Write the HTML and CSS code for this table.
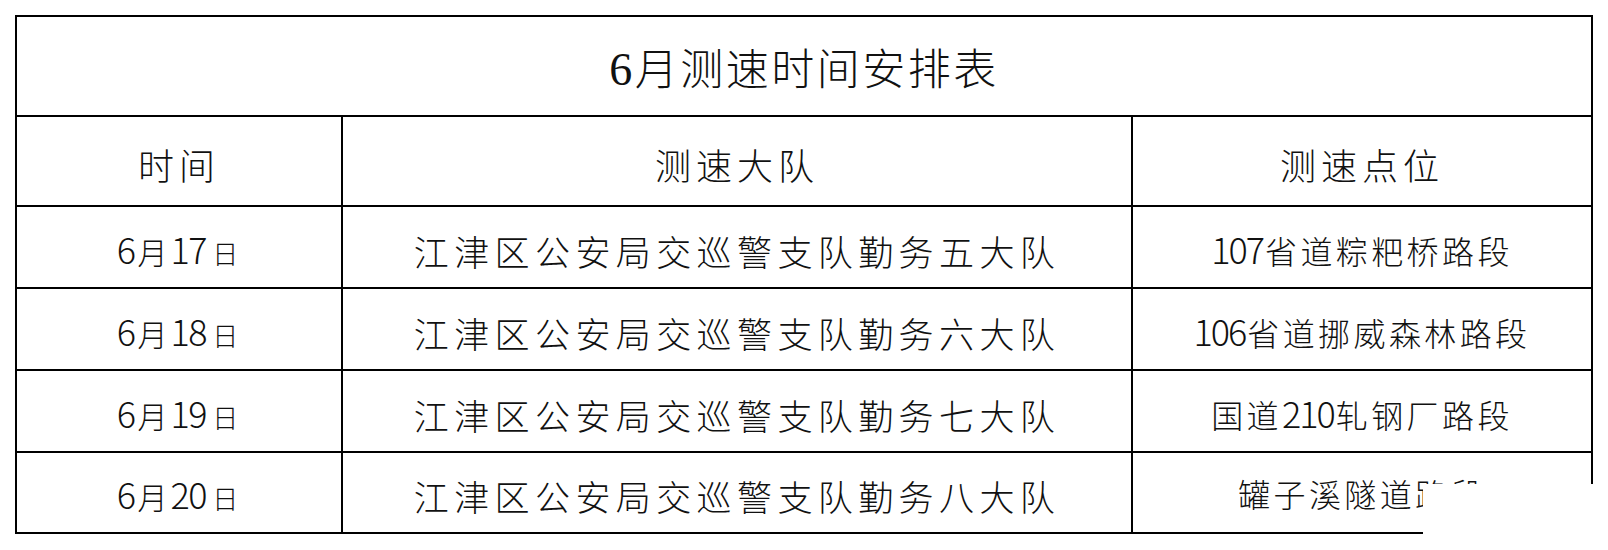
FILE: index.html
```html
<!DOCTYPE html>
<html lang="zh-CN">
<head>
<meta charset="utf-8">
<title>6月测速时间安排表</title>
<link rel="stylesheet" href="styles.css">
</head>
<body>
<table class="sched">
  <colgroup>
    <col class="c1"><col class="c2"><col class="c3">
  </colgroup>
  <tr class="title-row"><td colspan="3" class="title"><span class="t6">6</span>月测速时间安排表</td></tr>
  <tr class="head-row">
    <td class="head">时间</td>
    <td class="head">测速大队</td>
    <td class="head">测速点位</td>
  </tr>
  <tr class="data-row">
    <td class="date"><span class="n">6</span><span class="cj">月</span><span class="n">17</span><span class="cj sm">日</span></td>
    <td class="team">江津区公安局交巡警支队勤务五大队</td>
    <td class="place"><span class="n">107</span>省道粽粑桥路段</td>
  </tr>
  <tr class="data-row">
    <td class="date"><span class="n">6</span><span class="cj">月</span><span class="n">18</span><span class="cj sm">日</span></td>
    <td class="team">江津区公安局交巡警支队勤务六大队</td>
    <td class="place"><span class="n">106</span>省道挪威森林路段</td>
  </tr>
  <tr class="data-row">
    <td class="date"><span class="n">6</span><span class="cj">月</span><span class="n">19</span><span class="cj sm">日</span></td>
    <td class="team">江津区公安局交巡警支队勤务七大队</td>
    <td class="place">国道<span class="n">210</span>轧钢厂路段</td>
  </tr>
  <tr class="data-row last">
    <td class="date"><span class="n">6</span><span class="cj">月</span><span class="n">20</span><span class="cj sm">日</span></td>
    <td class="team">江津区公安局交巡警支队勤务八大队</td>
    <td class="place">罐子溪隧道路段</td>
  </tr>
</table>
<div class="mask"></div>
</body>
</html>
```

FILE: styles.css
```css
html, body {
  margin: 0;
  padding: 0;
  background: #fff;
}
body {
  padding: 15px;
  font-family: "Noto Sans CJK SC", sans-serif;
  color: #111;
}
.sched {
  border-collapse: collapse;
  table-layout: fixed;
  width: 1578px;
}
.c1 { width: 326px; }
.c2 { width: 790px; }
.c3 { width: 460px; }
.sched td {
  border: 2px solid #000;
  padding: 6px 0 0 0;
  text-align: center;
  vertical-align: middle;
  line-height: 1;
  font-weight: 300;
}
.title-row td { height: 92px; }
.head-row td { height: 82px; }
.data-row td { height: 74px; }
.data-row.last td { height: 73px; }
.sched td.date,
.sched td.place { padding-top: 1px; }
.title {
  font-size: 43px;
  letter-spacing: 2.5px;
}
.t6 {
  font-family: "Liberation Serif", serif;
  font-size: 46px;
  font-weight: 400;
}
.head {
  font-size: 36px;
  letter-spacing: 5px;
}
.team {
  font-size: 35px;
  letter-spacing: 5.4px;
}
.place {
  font-size: 32px;
  letter-spacing: 3.4px;
}
.n {
  font-family: "Noto Sans CJK SC", sans-serif;
  font-size: 36px;
  font-weight: 300;
  letter-spacing: -2px;
}
.place .n { margin-right: 2px; }
.date .n { letter-spacing: -1.5px; }
.cj {
  font-size: 30px;
  margin: 0 3px;
}
.cj.sm {
  font-size: 26px;
  margin-left: 6px;
}
.mask {
  position: absolute;
  left: 1423px;
  top: 484px;
  width: 185px;
  height: 66px;
  background: #fff;
}
```
